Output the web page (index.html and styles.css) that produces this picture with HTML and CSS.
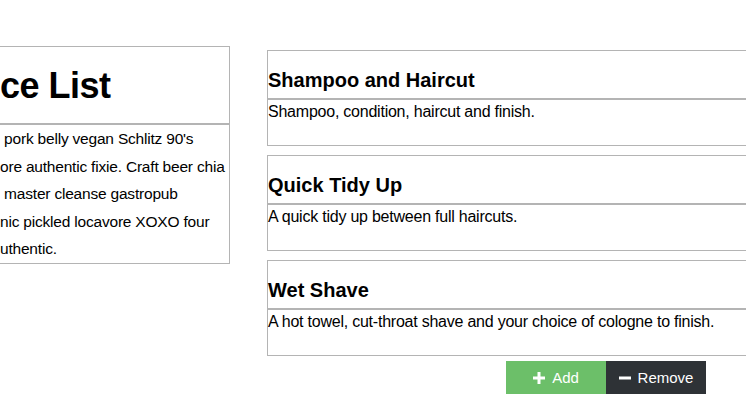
FILE: index.html
```html
<!DOCTYPE html>
<html lang="en">
<head>
<meta charset="utf-8">
<title>Service List</title>
<link rel="stylesheet" href="styles.css">
</head>
<body>
<main class="page">
  <section class="intro">
    <h1 class="intro-title">ce List</h1>
    <div class="intro-body">
      <div class="intro-line"> pork belly vegan Schlitz 90's</div>
      <div class="intro-line">ore authentic fixie. Craft beer chia</div>
      <div class="intro-line"> master cleanse gastropub</div>
      <div class="intro-line">nic pickled locavore XOXO four</div>
      <div class="intro-line">uthentic.</div>
    </div>
  </section>
  <section class="services">
    <article class="service">
      <h2 class="service-title">Shampoo and Haircut</h2>
      <p class="service-desc">Shampoo, condition, haircut and finish.</p>
    </article>
    <article class="service">
      <h2 class="service-title">Quick Tidy Up</h2>
      <p class="service-desc">A quick tidy up between full haircuts.</p>
    </article>
    <article class="service">
      <h2 class="service-title">Wet Shave</h2>
      <p class="service-desc">A hot towel, cut-throat shave and your choice of cologne to finish.</p>
    </article>
    <div class="actions">
      <button class="btn btn-add" type="button">
        <svg class="btn-icon" width="12" height="12" viewBox="0 0 12 12" aria-hidden="true"><rect x="4.5" y="0" width="3" height="12" fill="#fff"/><rect x="0" y="4.5" width="12" height="3" fill="#fff"/></svg>
        <span>Add</span>
      </button>
      <button class="btn btn-remove" type="button">
        <svg class="btn-icon" width="12" height="12" viewBox="0 0 12 12" aria-hidden="true"><rect x="0" y="4.5" width="12" height="3" fill="#fff"/></svg>
        <span>Remove</span>
      </button>
    </div>
  </section>
</main>
</body>
</html>
```

FILE: styles.css
```css
html, body {
  margin: 0;
  padding: 0;
  background: #fff;
  overflow: hidden;
}

body {
  width: 746px;
  height: 420px;
  font-family: "Liberation Sans", Arial, Helvetica, sans-serif;
  color: #000;
}

.page {
  display: flex;
  align-items: flex-start;
  gap: 37px;
  padding-top: 46px;
}

.intro {
  flex: none;
  box-sizing: border-box;
  width: 401px;
  margin-left: -171px;
  border: 1px solid #b4b4b4;
}

.intro-title {
  margin: 0;
  padding: 17px 0 15px 170px;
  font-size: 36px;
  line-height: 44px;
  letter-spacing: -0.5px;
  font-weight: bold;
  border-bottom: 2px solid #b4b4b4;
  white-space: nowrap;
}

.intro-body {
  padding-left: 170px;
  font-size: 15.5px;
  letter-spacing: -0.2px;
  line-height: 27.6px;
}

.intro-line {
  white-space: pre;
}

.services {
  flex: none;
  width: 520px;
  padding-top: 4px;
  display: flex;
  flex-direction: column;
  gap: 9px;
}

.service {
  border: 1px solid #b4b4b4;
}

.service-title {
  margin: 0;
  padding: 18px 0 6px;
  font-size: 20px;
  line-height: 23px;
  font-weight: bold;
  border-bottom: 2px solid #b4b4b4;
}

.service-desc {
  margin: 0;
  padding: 0 0 21px;
  font-size: 16px;
  letter-spacing: -0.23px;
  line-height: 24px;
}

.actions {
  display: flex;
  padding-left: 239px;
  margin-top: -4px;
}

.btn {
  display: flex;
  align-items: center;
  justify-content: center;
  gap: 7px;
  width: 100px;
  height: 33px;
  margin: 0;
  padding: 0;
  border: none;
  border-radius: 0;
  font-family: "Liberation Sans", Arial, Helvetica, sans-serif;
  font-size: 15px;
  color: #fff;
  cursor: pointer;
}

.btn-add {
  background: #6cbf69;
}

.btn-remove {
  background: #2e3236;
}

.btn-icon {
  display: block;
  flex: none;
}
```
